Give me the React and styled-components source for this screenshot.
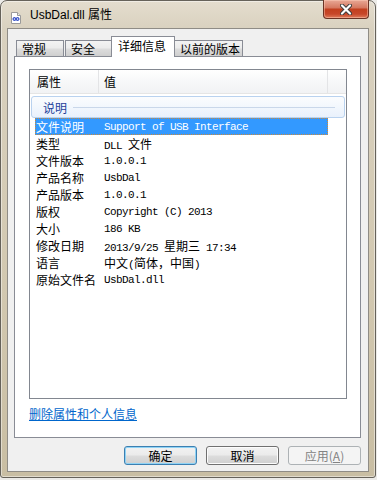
import React from 'react';
import styled, { createGlobalStyle } from 'styled-components';

const GlobalStyle = createGlobalStyle`
  body {
    margin: 0;
    background: #ecebe8;
    font-family: "Noto Sans CJK SC", "Liberation Sans", sans-serif;
    font-size: 12px;
  }
`;

const Window = styled.div`
  width: 376px;
  height: 478px;
  box-sizing: border-box;
  border: 1px solid #66625a;
  border-radius: 7px 7px 3px 3px;
  background: linear-gradient(180deg, #e4ddce 0%, #d9d1bf 28px, #d2c8b0 60%, #c9bea3 100%);
  box-shadow: inset 0 0 0 1px rgba(255, 255, 255, 0.45);
  padding: 0 6px 5px 6px;
  display: flex;
  flex-direction: column;
`;

const TitleBar = styled.div`
  height: 27px;
  display: flex;
  align-items: flex-start;
`;

const TitleIcon = styled.svg`
  margin: 11px 0 0 4px;
  flex: none;
`;

const TitleText = styled.div`
  margin: 6px 0 0 9px;
  font-family: "Liberation Sans", "Noto Sans CJK SC", sans-serif;
  font-size: 12px;
  line-height: 16px;
  color: #000;
`;

const CloseButton = styled.div`
  margin-left: auto;
  margin-top: -1px;
  width: 46px;
  height: 19px;
  box-sizing: border-box;
  border: 1px solid #6a3325;
  border-top: none;
  border-radius: 0 0 4px 4px;
  background: linear-gradient(180deg, #e9a895 0%, #d67a62 42%, #c2401f 52%, #c7472a 78%, #df7c5c 100%);
  box-shadow: inset 0 0 0 1px rgba(255, 210, 190, 0.45);
  display: flex;
  align-items: center;
  justify-content: center;
`;

const Client = styled.div`
  flex: 1;
  border: 1px solid #8f8c86;
  background: #f0f0f0;
  padding: 7px 7px 0 6px;
  display: flex;
  flex-direction: column;
`;

const TabRow = styled.div`
  height: 21px;
  display: flex;
  align-items: flex-end;
  padding-left: 2px;
  margin-bottom: -1px;
  position: relative;
  z-index: 1;
`;

const Tab = styled.div`
  box-sizing: border-box;
  width: ${p => p.$w}px;
  height: ${p => (p.$active ? 21 : 17)}px;
  margin-left: ${p => (p.$active ? -1 : 0)}px;
  margin-right: ${p => (p.$gap ? 1 : 0)}px;
  border: 1px solid #898c95;
  border-bottom: ${p => (p.$active ? 'none' : '1px solid #898c95')};
  background: ${p =>
    p.$active
      ? '#fff'
      : 'linear-gradient(180deg, #f3f3f3 0%, #ebebeb 48%, #dddddd 52%, #cfcfcf 100%)'};
  padding: ${p => (p.$active ? '1px 0 0 6px' : '0 0 0 5px')};
  font-size: 12px;
  line-height: 15px;
  color: #000;
  white-space: nowrap;
`;

const Panel = styled.div`
  flex: 1;
  border: 1px solid #898c95;
  background: #fff;
  padding: 12px 13px 0 14px;
  display: flex;
  flex-direction: column;
`;

const ListView = styled.div`
  height: 330px;
  box-sizing: border-box;
  border: 1px solid #828790;
  background: #fff;
  display: flex;
  flex-direction: column;
`;

const Header = styled.div`
  height: 23px;
  display: flex;
  background: linear-gradient(180deg, #ffffff 0%, #f7f8f9 50%, #f1f2f4 100%);
  border-bottom: 1px solid #e5e5e5;
`;

const HeadCell = styled.div`
  width: ${p => p.$w}px;
  box-sizing: border-box;
  padding-left: ${p => p.$pad}px;
  border-right: 1px solid #e3e4e6;
  display: flex;
  align-items: center;
  font-size: 12px;
  color: #000;
`;

const Group = styled.div`
  margin: 2px 1px 0 1px;
  height: 22px;
  box-sizing: border-box;
  border: 1px solid #b9d2ef;
  border-radius: 3px;
  background: linear-gradient(180deg, #fbfcfe 0%, #f2f7fd 50%, #e9f1fc 100%);
  display: flex;
  align-items: center;
  padding-left: 11px;
`;

const GroupTitle = styled.span`
  color: #1d3f9b;
  font-size: 12px;
`;

const GroupLine = styled.div`
  flex: 1;
  height: 1px;
  background: #c9d7ea;
  margin: 0 9px 0 6px;
`;

const Rows = styled.div`
  margin-left: 5px;
  width: 293px;
`;

const Row = styled.div`
  height: 17px;
  box-sizing: border-box;
  display: flex;
  align-items: center;
  color: ${p => (p.$selected ? '#fff' : '#000')};
  background: ${p => (p.$selected ? '#3399ff' : 'transparent')};
  border: 1px ${p => (p.$selected ? 'dotted #c98a3d' : 'solid transparent')};
`;

const NameCell = styled.div`
  width: 68px;
  flex: none;
  font-size: 12px;
  white-space: nowrap;
`;

const ValueCell = styled.div`
  white-space: nowrap;
  display: flex;
  align-items: baseline;
`;

const Mono = styled.span`
  font-family: "Liberation Mono", "DejaVu Sans Mono", monospace;
  font-size: 11px;
  letter-spacing: -0.6px;
  white-space: pre;
`;

const Cjk = styled.span`
  font-family: "Noto Sans CJK SC", sans-serif;
  font-size: 12px;
`;

const Link = styled.a`
  margin-top: 7px;
  align-self: flex-start;
  color: #0066cc;
  text-decoration: underline;
  font-size: 12px;
  line-height: 16px;
  cursor: pointer;
`;

const ButtonRow = styled.div`
  display: flex;
  justify-content: flex-end;
  gap: 9px;
  padding: 8px 0 6px;
`;

const Button = styled.div`
  width: 73px;
  height: 19px;
  box-sizing: border-box;
  border: 1px solid ${p => (p.$default ? '#3c7fb1' : p.$disabled ? '#adb2b5' : '#707070')};
  border-radius: 3px;
  background: ${p =>
    p.$disabled
      ? '#f4f4f4'
      : 'linear-gradient(180deg, #f2f2f2 0%, #ebebeb 48%, #dddddd 52%, #cfcfcf 100%)'};
  box-shadow: ${p =>
    p.$default ? 'inset 0 0 0 1px #8fd3f5' : p.$disabled ? 'none' : 'inset 0 0 0 1px #fcfcfc'};
  color: ${p => (p.$disabled ? '#838383' : '#000')};
  display: flex;
  align-items: center;
  justify-content: center;
  font-size: 12px;
`;

const props = [
  ['文件说明', 'Support of USB Interface'],
  ['类型', 'DLL 文件'],
  ['文件版本', '1.0.0.1'],
  ['产品名称', 'UsbDal'],
  ['产品版本', '1.0.0.1'],
  ['版权', 'Copyright (C) 2013'],
  ['大小', '186 KB'],
  ['修改日期', '2013/9/25 星期三 17:34'],
  ['语言', '中文(简体，中国)'],
  ['原始文件名', 'UsbDal.dll'],
];

function Value({ text }) {
  const parts = text.split(/([\u3000-\u9fff\uff00-\uffef]+)/).filter(Boolean);
  return (
    <ValueCell>
      {parts.map((part, i) =>
        /[\u3000-\u9fff\uff00-\uffef]/.test(part)
          ? <Cjk key={i}>{part}</Cjk>
          : <Mono key={i}>{part}</Mono>
      )}
    </ValueCell>
  );
}

export default function App() {
  return (
    <>
      <GlobalStyle />
      <Window>
        <TitleBar>
          <TitleIcon width="10" height="12" viewBox="0 0 10 12">
            <path d="M0.5 0.5 H6.5 L9.5 3.5 V11.5 H0.5 Z" fill="#fff" stroke="#9a9a9a" />
            <path d="M6.5 0.5 V3.5 H9.5" fill="#e8e8e8" stroke="#9a9a9a" />
            <path d="M2 7 C2.5 5.2 4.2 5.2 5 7 C5.8 8.8 7.5 8.8 8 7 C7.5 5.2 5.8 5.2 5 7 C4.2 8.8 2.5 8.8 2 7 Z" fill="none" stroke="#3550c8" strokeWidth="1.2" />
          </TitleIcon>
          <TitleText>UsbDal.dll 属性</TitleText>
          <CloseButton>
            <svg width="12" height="11" viewBox="0 0 12 11">
              <path d="M2 1.5 L10 9.5 M10 1.5 L2 9.5" stroke="#3b3b3b" strokeWidth="4" strokeLinecap="round" />
              <path d="M2 1.5 L10 9.5 M10 1.5 L2 9.5" stroke="#fff" strokeWidth="2.2" strokeLinecap="round" />
            </svg>
          </CloseButton>
        </TitleBar>
        <Client>
          <TabRow>
            <Tab $w={48} $gap>常规</Tab>
            <Tab $w={47}>安全</Tab>
            <Tab $w={64} $active>详细信息</Tab>
            <Tab $w={69} style={{ marginLeft: -1 }}>以前的版本</Tab>
          </TabRow>
          <Panel>
            <ListView>
              <Header>
                <HeadCell $w={69} $pad={7}>属性</HeadCell>
                <HeadCell $w={229} $pad={5}>值</HeadCell>
              </Header>
              <Group>
                <GroupTitle>说明</GroupTitle>
                <GroupLine />
              </Group>
              <Rows>
                {props.map(([name, value], i) => (
                  <Row key={name} $selected={i === 0}>
                    <NameCell>{name}</NameCell>
                    <Value text={value} />
                  </Row>
                ))}
              </Rows>
            </ListView>
            <Link>删除属性和个人信息</Link>
          </Panel>
          <ButtonRow>
            <Button $default>确定</Button>
            <Button>取消</Button>
            <Button $disabled>应用(<u>A</u>)</Button>
          </ButtonRow>
        </Client>
      </Window>
    </>
  );
}
